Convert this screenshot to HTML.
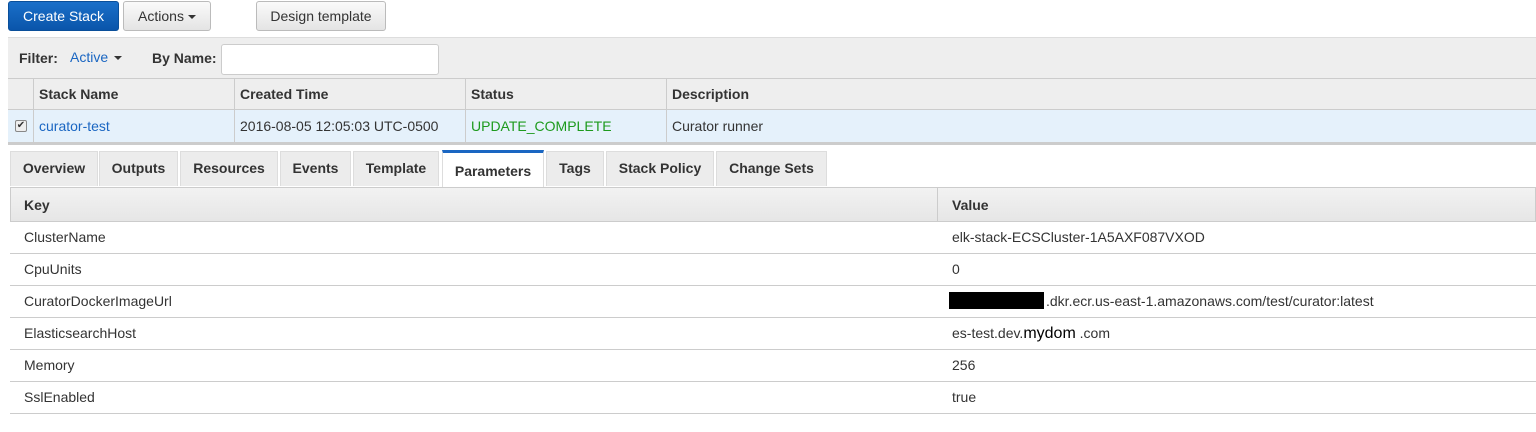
<!DOCTYPE html>
<html><head><style>
*{box-sizing:border-box;margin:0;padding:0}
body{width:1536px;height:432px;overflow:hidden;background:#fff;font-family:"Liberation Sans",sans-serif;font-size:14px;color:#333;position:relative}
.a{position:absolute;white-space:nowrap}
.btn{position:absolute;top:1px;height:30px;border:1px solid #bbb;border-radius:3px;background:linear-gradient(#fafafa,#e4e4e4);text-align:center;line-height:28px;color:#333}
.caret{display:inline-block;border-left:4px solid transparent;border-right:4px solid transparent;border-top:4px solid currentColor;vertical-align:middle;margin-left:4px}
.tab{position:absolute;top:151px;height:35px;background:#ececec;border:1px solid #ddd;border-bottom:none;font-weight:bold;text-align:center;line-height:33px;color:#333}
.row{position:absolute;left:10px;right:0;height:32px;border-bottom:1px solid #ccc;line-height:31px}
.row span{position:absolute}
</style></head><body>
<div class="btn" style="left:8px;width:111px;background:linear-gradient(#1a6fc9,#0a55aa);border-color:#0a4f9a;color:#fff">Create Stack</div>
<div class="btn" style="left:123px;width:88px">Actions<span class="caret"></span></div>
<div class="btn" style="left:256px;width:130px">Design template</div>

<div class="a" style="left:8px;top:37px;right:0;height:41px;background:#eee;border-top:1px solid #ddd"></div>
<div class="a" style="left:19px;top:50px;font-weight:bold">Filter:</div>
<div class="a" style="left:70px;top:49px;color:#1a66c2">Active<span class="caret" style="color:#333;margin-left:6px"></span></div>
<div class="a" style="left:152px;top:50px;font-weight:bold">By Name:</div>
<div class="a" style="left:221px;top:44px;width:218px;height:31px;background:#fff;border:1px solid #ccc;border-radius:3px"></div>

<div class="a" style="left:8px;top:78px;right:0;height:32px;background:#eee;border-top:1px solid #ccc;border-bottom:1px solid #ccc"></div>
<div class="a" style="left:8px;top:110px;right:0;height:32px;background:#e5f1fb"></div>
<div class="a" style="left:8px;top:142px;right:0;height:3px;background:#ccc"></div>
<div class="a" style="left:33px;top:78px;width:1px;height:64px;background:#ccc"></div>
<div class="a" style="left:234px;top:78px;width:1px;height:64px;background:#ccc"></div>
<div class="a" style="left:465px;top:78px;width:1px;height:64px;background:#ccc"></div>
<div class="a" style="left:666px;top:78px;width:1px;height:64px;background:#ccc"></div>
<div class="a" style="left:39px;top:86px;font-weight:bold">Stack Name</div>
<div class="a" style="left:240px;top:86px;font-weight:bold">Created Time</div>
<div class="a" style="left:471px;top:86px;font-weight:bold">Status</div>
<div class="a" style="left:672px;top:86px;font-weight:bold">Description</div>
<div class="a" style="left:15px;top:120px;width:12px;height:12px;border:1px solid #888;border-radius:2px;background:#eee;font-size:10px;line-height:10px;text-align:center">✔</div>
<div class="a" style="left:39px;top:118px;color:#1a66c2">curator-test</div>
<div class="a" style="left:240px;top:118px">2016-08-05 12:05:03 UTC-0500</div>
<div class="a" style="left:471px;top:118px;color:#1d9a1d">UPDATE_COMPLETE</div>
<div class="a" style="left:672px;top:118px">Curator runner</div>

<div class="tab" style="left:10px;width:88px">Overview</div>
<div class="tab" style="left:99px;width:79px">Outputs</div>
<div class="tab" style="left:180px;width:98px">Resources</div>
<div class="tab" style="left:280px;width:71px">Events</div>
<div class="tab" style="left:353px;width:86px">Template</div>
<div class="tab" style="left:442px;top:150px;width:102px;height:38px;background:#fff;border-top:3px solid #1a66c2;line-height:37px">Parameters</div>
<div class="tab" style="left:546px;width:58px">Tags</div>
<div class="tab" style="left:606px;width:108px">Stack Policy</div>
<div class="tab" style="left:716px;width:111px">Change Sets</div>

<div class="a" style="left:10px;top:187px;right:0;height:35px;background:linear-gradient(#f2f2f2,#e6e6e6);border:1px solid #ccc"></div>
<div class="a" style="left:937px;top:187px;width:1px;height:35px;background:#ccc"></div>
<div class="a" style="left:24px;top:197px;font-weight:bold">Key</div>
<div class="a" style="left:952px;top:197px;font-weight:bold">Value</div>

<div class="row" style="top:222px"><span style="left:14px">ClusterName</span><span style="left:942px">elk-stack-ECSCluster-1A5AXF087VXOD</span></div>
<div class="row" style="top:254px"><span style="left:14px">CpuUnits</span><span style="left:942px">0</span></div>
<div class="row" style="top:286px"><span style="left:14px">CuratorDockerImageUrl</span><span style="left:939px;top:6px;width:95px;height:17px;background:#000"></span><span style="left:1036px">.dkr.ecr.us-east-1.amazonaws.com/test/curator:latest</span></div>
<div class="row" style="top:318px"><span style="left:14px">ElasticsearchHost</span><span style="left:942px">es-test.dev.<b style="font-weight:normal;color:#000;font-size:16px">mydom</b> .com</span></div>
<div class="row" style="top:350px"><span style="left:14px">Memory</span><span style="left:942px">256</span></div>
<div class="row" style="top:382px"><span style="left:14px">SslEnabled</span><span style="left:942px">true</span></div>
</body></html>
